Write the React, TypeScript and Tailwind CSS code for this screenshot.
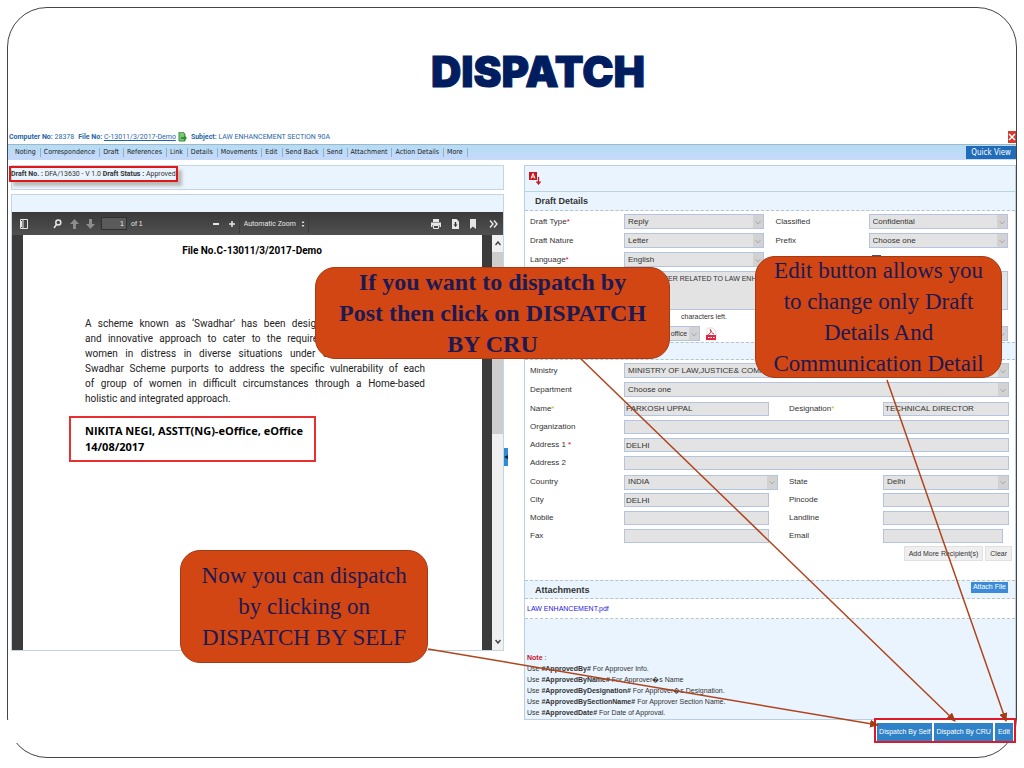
import type { ReactNode } from "react";

type FieldProps = {
  id: string;
  value?: string;
  className?: string;
};

const menuItems = [
  "Noting",
  "Correspondence",
  "Draft",
  "References",
  "Link",
  "Details",
  "Movements",
  "Edit",
  "Send Back",
  "Send",
  "Attachment",
  "Action Details",
  "More",
];

const letterLines = [
  "A scheme known as ‘Swadhar’ has been designed with more flexible",
  "and innovative approach to cater to the requirement of very different",
  "women in distress in diverse situations under different and difficult",
  "Swadhar Scheme purports to address the specific vulnerability of each",
  "of group of women in difficult circumstances through a Home-based",
];

const notes = [
  { tag: "#ApprovedBy#", text: "For Approver Info." },
  { tag: "#ApprovedByName#", text: "For Approver\uFFFDs Name" },
  { tag: "#ApprovedByDesignation#", text: "For Approver\uFFFDs Designation." },
  { tag: "#ApprovedBySectionName#", text: "For Approver Section Name." },
  { tag: "#ApprovedDate#", text: "For Date of Approval." },
];

function TextField({ id, value = "", className = "" }: FieldProps) {
  return (
    <input
      id={id}
      type="text"
      defaultValue={value}
      className={`h-3.5 w-full min-w-0 border border-[#b4c4e0] bg-[#e3e3e3] px-px ${className}`}
    />
  );
}

function SelectField({
  id,
  value = "",
  label,
  className = "",
}: FieldProps & { label?: string }) {
  return (
    <div className={`relative min-w-0 ${className}`}>
      <select
        id={id}
        aria-label={label}
        defaultValue={value}
        className="block h-[15px] w-full appearance-none border border-[#b4c4e0] bg-[#e3e3e3] pl-[3px] pr-3"
      >
        <option>{value}</option>
      </select>
      <span className="pointer-events-none absolute inset-y-px right-px flex w-2.5 items-center justify-center bg-[#d2d2d2]">
        <svg viewBox="0 0 8 8" className="size-2" fill="none" stroke="#aaa">
          <path d="M1.500 3 4 6l2.500-3" />
        </svg>
      </span>
    </div>
  );
}

function Label({
  htmlFor,
  mark,
  children,
}: {
  htmlFor: string;
  mark?: string;
  children: ReactNode;
}) {
  return (
    <label htmlFor={htmlFor}>
      {children}
      {mark && <span className={mark}>*</span>}
    </label>
  );
}

function DraftDetails() {
  return (
    <section>
      <div className="flex h-[19px] items-center border-b border-dashed border-[#b5c3cb] bg-[#eaf4fe] pl-2.5">
        <h2 className="text-[9px] font-bold">Draft Details</h2>
      </div>
      <div className="grid auto-rows-[19px] grid-cols-[94px_1fr_105px_1fr] items-center pt-px pr-[7px] pl-[5px] text-[8px] [&>label:nth-of-type(even)]:pl-3">
        <Label htmlFor="draft-type" mark="text-red-600">Draft Type</Label>
        <SelectField id="draft-type" value="Reply" />
        <Label htmlFor="classified">Classified</Label>
        <SelectField id="classified" value="Confidential" />
        <Label htmlFor="draft-nature">Draft Nature</Label>
        <SelectField id="draft-nature" value="Letter" />
        <Label htmlFor="prefix">Prefix</Label>
        <SelectField id="prefix" value="Choose one" />
        <Label htmlFor="language" mark="text-red-600">Language</Label>
        <SelectField id="language" value="English" />
        <input
          type="checkbox"
          aria-label="Reply required"
          className="col-start-4 ml-[3px] size-[9px] appearance-none border border-gray-600"
        />
      </div>
      <div className="pt-0.5 pr-[7px] pl-[99px]">
        <textarea
          aria-label="Subject"
          defaultValue="DEMO LETTER RELATED TO LAW ENHANCEMENT"
          className="block h-[39px] w-full resize-none border border-[#b4c4e0] bg-[#e3e3e3] p-px pl-[3px]"
        />
        <p className="h-[15px] pt-px pl-[57px]">characters left.</p>
      </div>
      <div className="flex h-[17px] items-center justify-between pr-[7px] pl-[99px]">
        <div className="flex items-center gap-[5px]">
          <SelectField id="sender" label="Sender" value="NIKITA NEGI office" className="w-[76px]" />
          <svg viewBox="0 0 12 14" className="h-3.5 w-3">
            <path d="M2 1h6l3 3v9H2z" fill="#fff" stroke="#ddd" />
            <path d="M5 2c1 3 2 4 4 5M6 3c0 2-1 4-3 5" fill="none" stroke="#d33" />
            <rect x="1" y="8" width="10" height="5" fill="#dc2845" />
            <path d="M3 10.500h1.500M5.500 10.500h1.500M8 10.500h1.500" stroke="#fff" />
          </svg>
        </div>
        <SelectField id="signature" label="Signature" className="w-[140px]" />
      </div>
    </section>
  );
}

function CommunicationDetails() {
  return (
    <section>
      <div className="h-[18px] border-y border-dashed border-[#b5c3cb] bg-[#eaf4fe]" />
      <div className="text-[8px]">
        <div className="grid auto-rows-[19px] grid-cols-[94px_1fr] items-center pt-px pr-1.5 pl-[5px]">
          <Label htmlFor="ministry">Ministry</Label>
          <SelectField id="ministry" value="MINISTRY OF LAW,JUSTICE& COMPANY AFFAIRS" />
          <Label htmlFor="department">Department</Label>
          <SelectField id="department" value="Choose one" />
        </div>
        <div className="grid h-[19px] grid-cols-[94px_1fr_94px_126px] items-center pr-1.5 pl-[5px]">
          <Label htmlFor="name" mark="text-yellow-500">Name</Label>
          <div className="pr-5">
            <TextField id="name" value="PARKOSH UPPAL" />
          </div>
          <Label htmlFor="designation" mark="text-yellow-500">Designation</Label>
          <TextField id="designation" value="TECHNICAL DIRECTOR" />
        </div>
        <div className="grid auto-rows-[18px] grid-cols-[94px_1fr] items-center pr-1.5 pl-[5px]">
          <Label htmlFor="organization">Organization</Label>
          <TextField id="organization" />
          <Label htmlFor="address-1" mark="pl-0.5 text-red-600">Address 1</Label>
          <TextField id="address-1" value="DELHI" />
          <Label htmlFor="address-2">Address 2</Label>
          <TextField id="address-2" />
        </div>
        <div className="grid auto-rows-[18px] grid-cols-[94px_1fr_94px_126px] items-center pt-px pr-1.5 pl-[5px]">
          <Label htmlFor="country">Country</Label>
          <SelectField id="country" value="INDIA" className="mr-[11px]" />
          <Label htmlFor="state">State</Label>
          <SelectField id="state" value="Delhi" />
          <Label htmlFor="city">City</Label>
          <div className="pr-5">
            <TextField id="city" value="DELHI" />
          </div>
          <Label htmlFor="pincode">Pincode</Label>
          <TextField id="pincode" />
          <Label htmlFor="mobile">Mobile</Label>
          <div className="pr-5">
            <TextField id="mobile" />
          </div>
          <Label htmlFor="landline">Landline</Label>
          <TextField id="landline" />
          <Label htmlFor="fax">Fax</Label>
          <div className="pr-5">
            <TextField id="fax" />
          </div>
          <Label htmlFor="email">Email</Label>
          <div className="pr-1.5">
            <TextField id="email" />
          </div>
        </div>
      </div>
      <div className="flex h-[35px] items-start justify-end gap-0.5 pt-px pr-[3px]">
        <button className="h-[15px] border border-[#e0e0e0] bg-[#efefef] px-1">Add More Recipient(s)</button>
        <button className="h-[15px] border border-[#e0e0e0] bg-[#efefef] px-1">Clear</button>
      </div>
    </section>
  );
}

function Attachments() {
  return (
    <section>
      <div className="flex h-[19px] items-center justify-between border-y border-dashed border-[#b5c3cb] bg-[#eaf4fe] pr-[7px] pl-2.5">
        <h2 className="text-[9px] font-bold">Attachments</h2>
        <button className="mb-[5px] h-[11px] bg-[#3d8bd8] px-0.5 leading-[10px] text-white">
          Attach File
        </button>
      </div>
      <div className="flex h-5 items-center border-b border-dashed border-[#b5c3cb] pl-0.5">
        <a href="#attachment" className="text-[#2a20e0]">LAW ENHANCEMENT.pdf</a>
      </div>
      <div className="bg-[#eaf4fe] pt-[33px] pb-px pl-0.5">
        <p className="leading-[11px]">
          <b className="text-[#c4142c]">Note</b> :
        </p>
        {notes.map((note) => (
          <p key={note.tag} className="leading-[11px]">
            Use <b>{note.tag}</b> {note.text}
          </p>
        ))}
      </div>
    </section>
  );
}

function PdfToolbar() {
  return (
    <div className="flex h-[23px] items-center bg-gradient-to-b from-[#3a3a3a] to-[#505050] pr-[5px] pl-2 text-[#e6e6e6]">
      <button aria-label="Toggle sidebar">
        <svg viewBox="0 0 8 10" className="h-2.5 w-2" fill="none" stroke="currentColor">
          <path d="M.5.5h7v9h-7zM3 1v8M1.500 2v6" />
        </svg>
      </button>
      <button aria-label="Find" className="ml-[25px]">
        <svg viewBox="0 0 9 10" className="h-2.5 w-[9px]" fill="none" stroke="currentColor" strokeWidth="1.500">
          <circle cx="5.300" cy="3.500" r="2.500" />
          <path d="M3.500 5.500 1 9" />
        </svg>
      </button>
      <button aria-label="Previous page" className="ml-2 text-[#8c8c8c]">
        <svg viewBox="0 0 9 10" className="h-2.5 w-[9px]" fill="currentColor">
          <path d="M4.500 0 9 5H6v5H3V5H0z" />
        </svg>
      </button>
      <button aria-label="Next page" className="ml-[7px] text-[#8c8c8c]">
        <svg viewBox="0 0 9 10" className="h-2.5 w-[9px]" fill="currentColor">
          <path d="M4.500 10 9 5H6V0H3v5H0z" />
        </svg>
      </button>
      <input
        aria-label="Page"
        defaultValue="1"
        className="ml-1.5 h-[13px] w-[26px] border border-[#303030] bg-[#5a5a5a] pr-0.5 text-right"
      />
      <span className="ml-1">of 1</span>
      <button aria-label="Zoom out" className="ml-[70px] h-0.5 w-1.5 bg-[#e6e6e6]" />
      <button aria-label="Zoom in" className="ml-2.5">
        <svg viewBox="0 0 6 6" className="size-1.5" stroke="currentColor" strokeWidth="1.500">
          <path d="M3 0v6M0 3h6" />
        </svg>
      </button>
      <div className="relative ml-1 flex items-center">
        <select
          aria-label="Zoom level"
          className="h-[18px] w-[70px] appearance-none border-x border-[#3c3c3c] pl-1 font-['Roboto',sans-serif]"
        >
          <option>Automatic Zoom</option>
        </select>
        <svg viewBox="0 0 4 8" className="pointer-events-none absolute right-1 h-2 w-1" fill="currentColor">
          <path d="M2 1l1.500 2h-3zM2 7L.5 5h3z" />
        </svg>
      </div>
      <div className="ml-auto flex items-center gap-[11px]">
        <button aria-label="Print">
          <svg viewBox="0 0 10 10" className="h-2.5 w-2.5" fill="currentColor">
            <path d="M2 0h6v3H2zM0 3.500h10V8H8.500V6h-7v2H0z" />
            <path d="M2.500 6.500h5v3h-5z" fill="none" stroke="currentColor" />
          </svg>
        </button>
        <button aria-label="Download">
          <svg viewBox="0 0 7 10" className="h-2.5 w-[7px]">
            <path d="M0 0h4.500L7 2.500V10H0z" fill="currentColor" />
            <path d="M2.800 3h1.400v2.500h1.300l-2 2.500-2-2.500h1.300z" fill="#333" />
          </svg>
        </button>
        <button aria-label="Bookmark">
          <svg viewBox="0 0 6 10" className="h-2.5 w-1.5" fill="currentColor">
            <path d="M0 0h6v10L3 7.500 0 10z" />
          </svg>
        </button>
        <button aria-label="More tools" className="ml-0.5">
          <svg viewBox="0 0 9 8" className="h-2 w-[9px]" fill="none" stroke="currentColor" strokeWidth="1.500">
            <path d="M1 .5 4 4 1 7.500M5 .5 8 4 5 7.500" />
          </svg>
        </button>
      </div>
    </div>
  );
}

function PdfViewer() {
  return (
    <div className="mt-1 border border-[#c3d5e2]">
      <div className="h-[17px] bg-[#eaf4fe]" />
      <PdfToolbar />
      <div className="flex h-[415px] bg-[#3b3b3b] pl-[11px]">
        <article className="flex-1 bg-white pt-2 pr-[57px] pl-[46px] font-['Roboto',sans-serif] text-[10px] text-[#222]">
          <h2 className="-mr-2.5 text-center leading-4 font-bold text-black">
            File No.C-13011/3/2017-Demo
          </h2>
          <div className="pt-[57px] pl-4 leading-[15px]">
            {letterLines.map((line) => (
              <p key={line} className="whitespace-nowrap [text-align-last:justify]">
                {line}
              </p>
            ))}
            <p>holistic and integrated approach.</p>
          </div>
          <p className="mt-2.5 w-[247px] border-2 border-[#e83030] px-3.5 py-[5px] font-['Open_Sans',sans-serif] text-[11px] leading-4 font-bold whitespace-nowrap text-black">
            NIKITA NEGI, ASSTT(NG)-eOffice, eOffice
            <br />
            14/08/2017
          </p>
        </article>
        <div className="ml-2.5 flex w-[11px] flex-col items-center justify-between bg-[#f0f0f0] py-1.5">
          <svg viewBox="0 0 6 5" className="h-[5px] w-1.5" fill="none" stroke="#444" strokeWidth="1.500">
            <path d="M.5 4 3 1l2.500 3" />
          </svg>
          <div className="mt-1.5 mb-auto h-[182px] w-full bg-[#cdcdcd]" />
          <svg viewBox="0 0 6 5" className="h-[5px] w-1.5" fill="none" stroke="#444" strokeWidth="1.500">
            <path d="M.5 1 3 4l2.500-3" />
          </svg>
        </div>
      </div>
    </div>
  );
}

function Callout({ className, children }: { className: string; children: ReactNode }) {
  return (
    <div
      className={`absolute flex items-center justify-center rounded-[20px] border border-[#a63a12] bg-[#d24614] text-center font-['Liberation_Serif',serif] leading-[31px] text-[#1c1a52] ${className}`}
    >
      <p className="whitespace-nowrap">{children}</p>
    </div>
  );
}

function Arrows() {
  return (
    <svg
      viewBox="0 0 1024 768"
      preserveAspectRatio="none"
      className="pointer-events-none absolute inset-0 size-full"
    >
      <defs>
        <marker id="head" markerUnits="userSpaceOnUse" markerWidth="9" markerHeight="8" refX="8" refY="4" orient="auto">
          <path d="M0 0 9 4 0 8z" fill="#a63a12" />
        </marker>
      </defs>
      <g stroke="#b0441c" strokeWidth="1.500">
        <line x1="428" y1="649" x2="878" y2="725" markerEnd="url(#head)" />
        <line x1="580" y1="358" x2="955" y2="721" markerEnd="url(#head)" />
        <line x1="887" y1="380" x2="1006" y2="721" markerEnd="url(#head)" />
      </g>
    </svg>
  );
}

export default function App() {
  return (
    <div className="relative min-h-screen bg-white px-[7px] pt-[7px] pb-2.5 font-['Liberation_Sans',sans-serif] text-[7px] leading-3 text-[#333]">
      <main className="rounded-[40px] border border-[#444]">
        <h1 className="pt-10 pl-[52px] text-center font-['Inter',sans-serif] text-[42px] leading-[48px] font-black text-[#001d5f] [-webkit-text-stroke:1px_#001d5f]">
          DISPATCH
        </h1>
        <header>
          <div className="mt-[34px] flex h-3.5 items-center font-['Roboto',sans-serif] text-[#1f66a8]">
            <p className="pl-px">
              <b>Computer No:</b> 28378
            </p>
            <p className="ml-1">
              <b>File No:</b>{" "}
              <a href="#file" className="underline">C-13011/3/2017-Demo</a>
            </p>
            <svg viewBox="0 0 9 10" className="ml-0.5 h-2.5 w-[9px]">
              <path d="M1 0h4l2 2v7H1z" fill="#7fc47a" stroke="#3d9440" />
              <path d="M3 5h3V3l3 3-3 3V7H3z" fill="#2f8f35" />
            </svg>
            <p className="ml-1">
              <b>Subject:</b> LAW ENHANCEMENT SECTION 90A
            </p>
            <button aria-label="Close" className="ml-auto flex h-3 w-2 items-center justify-center bg-[#d63a2c] text-white">
              <svg viewBox="0 0 8 8" className="size-2" stroke="currentColor" strokeWidth="1.500">
                <path d="M1 1l6 6M7 1 1 7" />
              </svg>
            </button>
          </div>
          <nav className="flex h-4 items-center border-t border-[#9db8c8] bg-gradient-to-b from-[#b5dcf4] to-[#c6d9fb] pl-1 font-['DejaVu_Sans_Condensed','DejaVu_Sans',sans-serif] text-[#222]">
            {menuItems.map((item) => (
              <a key={item} href="#menu" className="border-r border-[#8fb0cc] pr-1 pl-[3px] leading-[9px] whitespace-nowrap">
                {item}
              </a>
            ))}
            <button className="ml-auto h-[13px] bg-[#216cb8] px-[5px] text-[8px] text-white">Quick View</button>
          </nav>
        </header>
        <div className="flex items-start pt-[5px] pl-[3px]">
          <div className="flex-1">
            <div className="h-[25px] border border-[#c3d5e2] bg-[#eaf4fe]">
              <p className="-ml-[3px] w-fit border-2 border-[#e01818] font-['Roboto',sans-serif] shadow-[4px_4px_3px_#bbb]">
                <b>Draft No. :</b> DFA/13630 - V 1.0 <b>Draft Status :</b> Approved
              </p>
            </div>
            <PdfViewer />
          </div>
          <button aria-label="Collapse panel" className="mt-[283px] mr-4 flex h-[18px] w-1 items-center bg-[#2f8bd0]">
            <svg viewBox="0 0 4 4" className="size-1" fill="#123">
              <path d="M0 2l4-2v4z" />
            </svg>
          </button>
          <div className="w-[492px] border border-[#b9cfe6]">
            <div className="flex h-[26px] items-center border-b border-[#b9d3e2] bg-[#eaf4fe] pl-1">
              <button aria-label="Download as PDF">
                <svg viewBox="0 0 12 13" className="h-[13px] w-3">
                  <path d="M0 0h8v8H0z" fill="#c8171e" />
                  <path d="M2 6.500 4 1.500l2 5M2.800 5h2.500" fill="none" stroke="#fff" />
                  <path d="M9.500 5v7M7.500 9.500l2 2.500 2-2.500" fill="none" stroke="#c8171e" strokeWidth="1.300" />
                </svg>
              </button>
            </div>
            <DraftDetails />
            <CommunicationDetails />
            <Attachments />
          </div>
        </div>
        {/* the action bar hides the frame's edge behind it */}
        <footer className="relative -mx-px mb-3.5 flex justify-end bg-gradient-to-r from-white from-5% to-transparent to-5% pr-px">
          <div className="-mt-0.5 flex gap-0.5 border-2 border-[#e01828] bg-white px-px pt-[3px] text-white">
            <button className="h-[18px] bg-[#2f82c8] px-0.5">Dispatch By Self</button>
            <button className="h-[18px] bg-[#2f82c8] px-0.5">Dispatch By CRU</button>
            <button className="h-[18px] bg-[#2f82c8] px-[3px]">Edit</button>
          </div>
        </footer>
      </main>
      <Callout className="top-[267px] left-[30.800%] h-[92px] w-[34.600%] text-[24px] font-bold">
        If you want to dispatch by
        <br />
        Post then click on DISPATCH
        <br />
        BY CRU
      </Callout>
      <Callout className="top-[256px] left-[73.700%] h-[122px] w-[24.200%] text-[23px]">
        Edit button allows you
        <br />
        to change only Draft
        <br />
        Details And
        <br />
        Communication Detail
      </Callout>
      <Callout className="top-[550px] left-[17.600%] h-[113px] w-[24.200%] text-[23px]">
        Now you can dispatch
        <br />
        by clicking on
        <br />
        DISPATCH BY SELF
      </Callout>
      <Arrows />
    </div>
  );
}
